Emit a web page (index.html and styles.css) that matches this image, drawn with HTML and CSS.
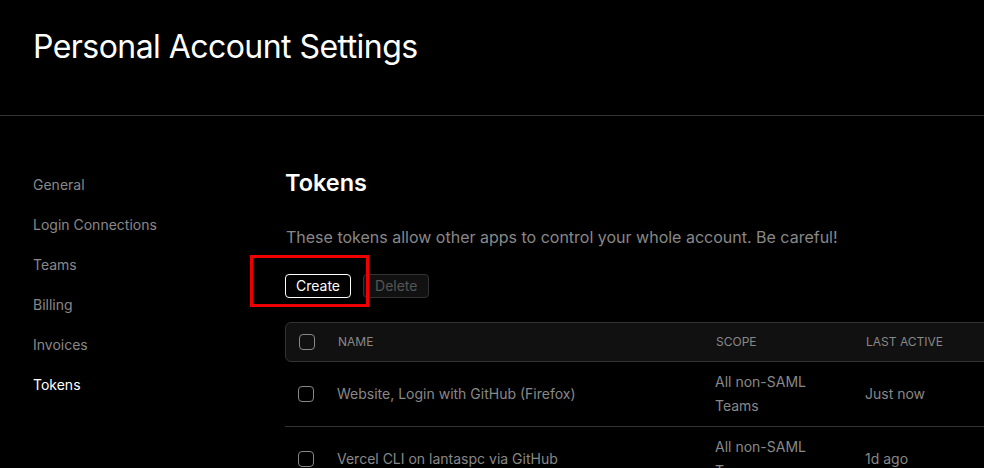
FILE: index.html
```html
<!DOCTYPE html>
<html>
<head>
<meta charset="utf-8">
<link rel="stylesheet" href="styles.css">
</head>
<body>
<header class="page-header">
  <h1 class="page-title">Personal Account Settings</h1>
</header>
<div class="layout">
  <nav class="sidebar">
    <a class="nav-item">General</a>
    <a class="nav-item">Login Connections</a>
    <a class="nav-item">Teams</a>
    <a class="nav-item">Billing</a>
    <a class="nav-item">Invoices</a>
    <a class="nav-item active">Tokens</a>
  </nav>
  <main class="content">
    <h2 class="section-title">Tokens</h2>
    <p class="section-desc">These tokens allow other apps to control your whole account. Be careful!</p>
    <div class="actions">
      <span class="highlight"></span>
      <button class="btn btn-primary">Create</button>
      <button class="btn btn-disabled">Delete</button>
    </div>
    <div class="table">
      <div class="row head">
        <span class="cell check"><span class="checkbox"></span></span>
        <span class="cell name">NAME</span>
        <span class="cell scope">SCOPE</span>
        <span class="cell active-col">LAST ACTIVE</span>
      </div>
      <div class="row">
        <span class="cell check"><span class="checkbox"></span></span>
        <span class="cell name">Website, Login with GitHub (Firefox)</span>
        <span class="cell scope">All non-SAML<br>Teams</span>
        <span class="cell active-col">Just now</span>
      </div>
      <div class="row">
        <span class="cell check"><span class="checkbox"></span></span>
        <span class="cell name">Vercel CLI on lantaspc via GitHub</span>
        <span class="cell scope">All non-SAML<br>Teams</span>
        <span class="cell active-col">1d ago</span>
      </div>
    </div>
  </main>
</div>
</body>
</html>
```
FILE: styles.css
```css
* { box-sizing: border-box; }
html, body { margin: 0; padding: 0; background: #000; overflow: hidden; }
body {
  font-family: Inter, "Noto Sans", sans-serif;
  color: #fff;
  width: 984px;
  height: 468px;
}
.page-header {
  height: 116px;
  border-bottom: 1px solid #333;
  padding: 27px 0 0 33px;
}
.page-title {
  margin: 0;
  font-size: 32px;
  font-weight: 400;
  line-height: 40px;
  letter-spacing: -0.55px;
}
.layout {
  display: flex;
}
.sidebar {
  width: 286px;
  flex: none;
  padding: 59px 0 0 33px;
  display: flex;
  flex-direction: column;
}
.nav-item {
  font-size: 14px;
  line-height: 20px;
  height: 40px;
  color: #888;
}
.nav-item.active { color: #fff; }
.content {
  flex: 1;
  padding-top: 55px;
  min-width: 0;
}
.section-title {
  margin: 0 0 0 -1px;
  font-size: 23.5px;
  font-weight: 600;
  line-height: 24px;
}
.section-desc {
  margin: 30px 0 0;
  font-size: 16px;
  line-height: 24px;
  color: #888;
}
.actions {
  position: relative;
  display: flex;
  gap: 12px;
  margin-top: 25px;
  margin-left: -1px;
}
.highlight {
  position: absolute;
  left: -35px;
  top: -19px;
  width: 119px;
  height: 52px;
  border: 3px solid #e00;
}
.btn {
  font-family: inherit;
  font-size: 14px;
  height: 24px;
  padding: 0 10px;
  border-radius: 4px;
  background: #000;
  line-height: 22px;
}
.btn-primary {
  border: 1px solid #fff;
  color: #fff;
}
.btn-disabled {
  border: 1px solid #333;
  background: #111;
  color: #555;
  padding: 0 11px;
}
.table {
  margin-top: 24px;
  margin-left: -1px;
  width: 760px;
}
.row {
  display: flex;
  align-items: center;
  height: 65px;
  border-bottom: 1px solid #333;
  font-size: 14px;
  color: #888;
}
.row.head {
  height: 40px;
  background: #111;
  border: 1px solid #333;
  border-radius: 6px;
  font-size: 12px;
}
.cell { line-height: 24px; }
.check {
  width: 52px;
  padding-left: 13px;
  display: flex;
  align-items: center;
}
.checkbox {
  width: 16px;
  height: 16px;
  border: 1px solid #888;
  border-radius: 4px;
  display: block;
}
.name { width: 378px; }
.scope { width: 150px; }
.active-col { flex: 1; }
```
